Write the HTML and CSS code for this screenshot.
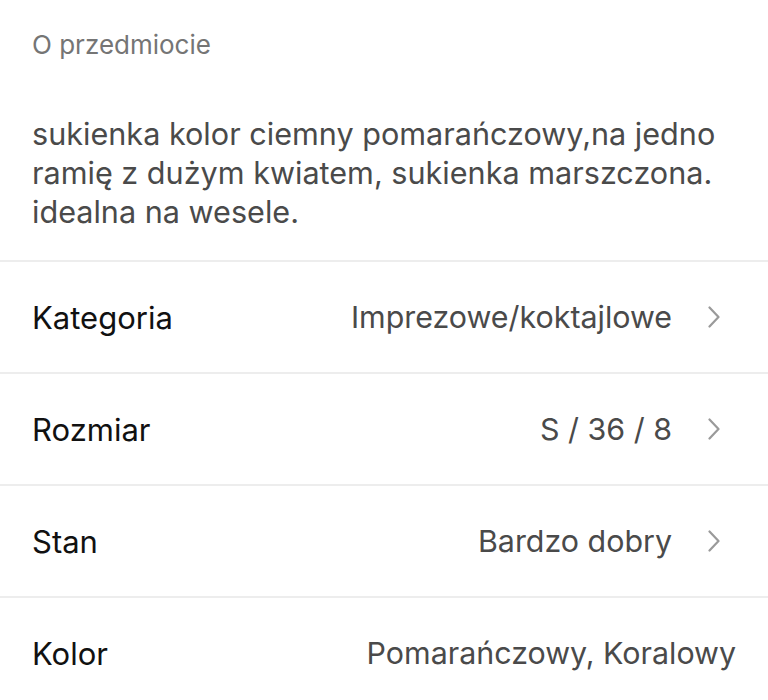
FILE: index.html
```html
<!DOCTYPE html>
<html lang="pl">
<head>
  <meta charset="UTF-8" />
  <meta name="viewport" content="width=device-width, initial-scale=1.0"/>
  <title>O przedmiocie</title>
  <link rel="stylesheet" href="styles.css">
</head>
<body>
  <section class="about">
    <h2 class="about-title">O przedmiocie</h2>
    <p class="about-text">sukienka kolor ciemny pomarańczowy,na jedno ramię z dużym kwiatem, sukienka marszczona. idealna na wesele.</p>
  </section>

  <ul class="details">
    <li class="detail-row">
      <span class="detail-label">Kategoria</span>
      <span class="detail-value">Imprezowe/koktajlowe</span>
      <svg class="chevron" viewBox="0 0 12 22" width="12" height="22"><path d="M1.5 1.5 L10.5 11 L1.5 20.5" /></svg>
    </li>
    <li class="detail-row">
      <span class="detail-label">Rozmiar</span>
      <span class="detail-value">S / 36 / 8</span>
      <svg class="chevron" viewBox="0 0 12 22" width="12" height="22"><path d="M1.5 1.5 L10.5 11 L1.5 20.5" /></svg>
    </li>
    <li class="detail-row">
      <span class="detail-label">Stan</span>
      <span class="detail-value">Bardzo dobry</span>
      <svg class="chevron" viewBox="0 0 12 22" width="12" height="22"><path d="M1.5 1.5 L10.5 11 L1.5 20.5" /></svg>
    </li>
    <li class="detail-row">
      <span class="detail-label">Kolor</span>
      <span class="detail-value">Pomarańczowy, Koralowy</span>
    </li>
  </ul>
</body>
</html>
```

FILE: styles.css
```css
* {
  margin: 0;
  padding: 0;
  box-sizing: border-box;
}

html, body {
  width: 100%;
  background-color: #fff;
  font-family: Inter, "Liberation Sans", sans-serif;
  overflow: hidden;
}

.about {
  padding: 30px 32px 29px;
}

.about-title {
  font-size: 26px;
  font-weight: 400;
  line-height: 30px;
  color: #757575;
}

.about-text {
  margin-top: 54px;
  font-size: 30.6px;
  line-height: 39px;
  color: #4a4a4a;
}

.details {
  list-style: none;
}

.detail-row {
  display: flex;
  align-items: center;
  height: 112px;
  padding: 0 32px;
  border-top: 2px solid #ededed;
}

.detail-label {
  font-size: 31px;
  color: #111;
}

.detail-value {
  margin-left: auto;
  font-size: 30.4px;
  color: #4a4a4a;
}

.chevron {
  margin-left: 36px;
  margin-right: 16px;
  fill: none;
  stroke: #9a9a9a;
  stroke-width: 2.2;
  stroke-linecap: round;
  stroke-linejoin: round;
}
```
